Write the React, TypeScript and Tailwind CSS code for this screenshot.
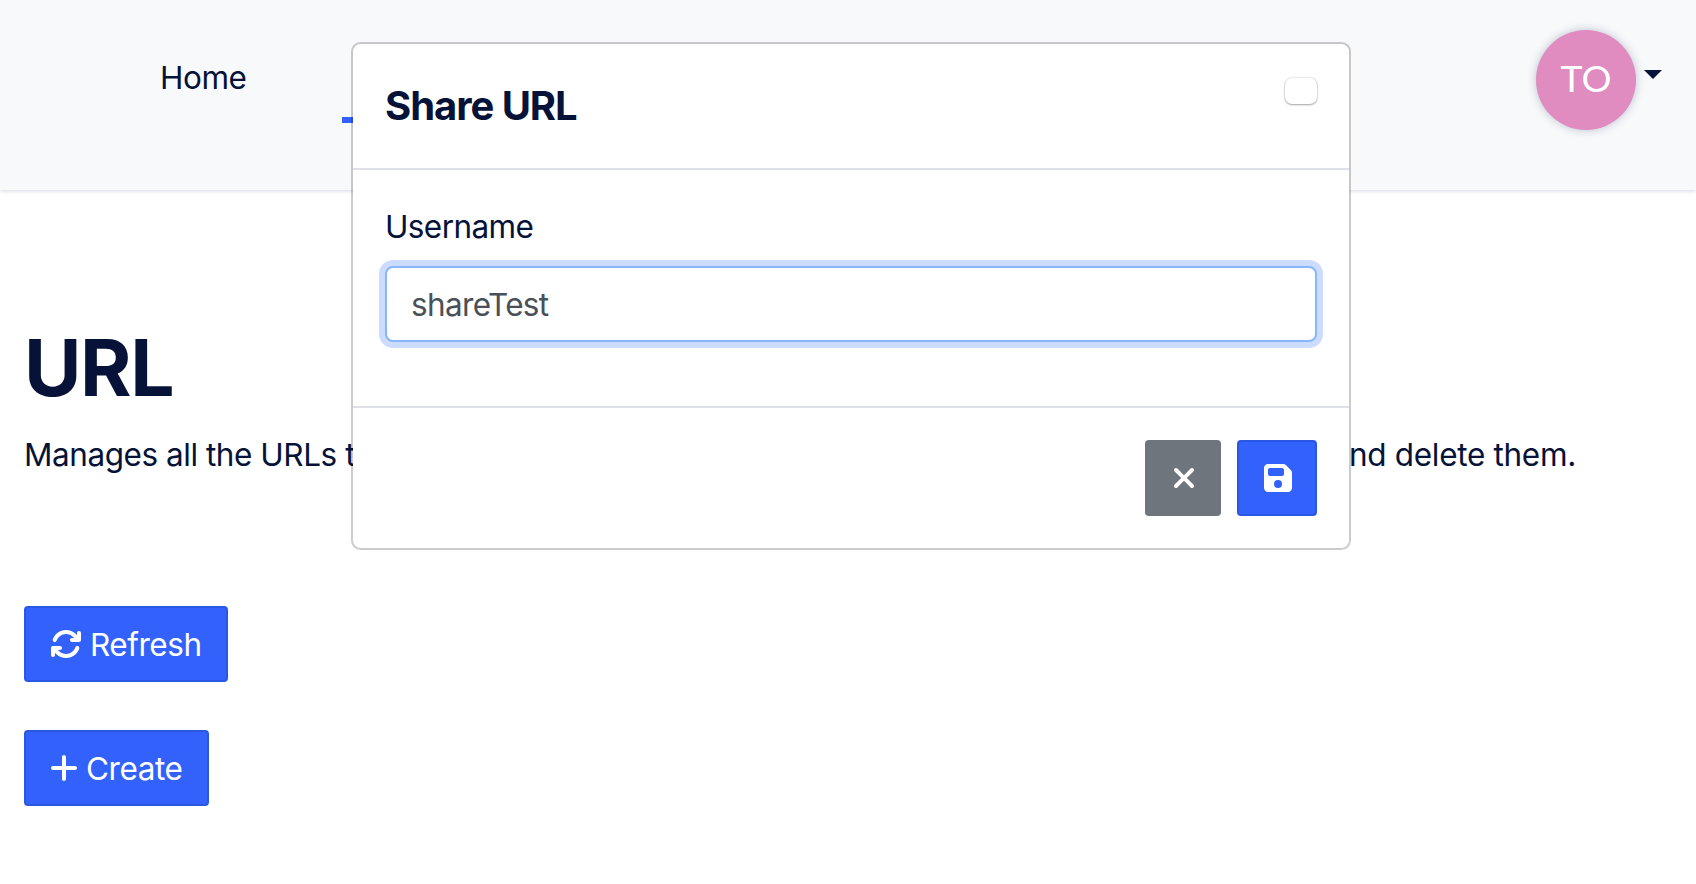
import React from "react";
import { FaArrowsRotate, FaFloppyDisk, FaPlus, FaXmark } from "react-icons/fa6";

function Navbar() {
  return (
    <header className="flex h-[190px] items-start justify-between bg-[#f8f9fb] shadow-[0_1px_4px_rgba(20,30,100,0.18)]">
      <nav className="flex pt-[54px] pl-[160px]">
        <a className="w-[182px] leading-[48px] tracking-[-0.45px]">Home</a>
        <a className="mt-[63px] h-[6px] w-[120px] bg-[#3262fb]" aria-label="URL" />
      </nav>
      <div className="flex pt-[30px] pr-[34px]">
        <div className="flex size-[100px] items-center justify-center rounded-full bg-[#e08cc0] pb-[4px] font-['Lato',sans-serif] text-[37.5px] leading-none text-white shadow-[0_0_10px_rgba(10,30,70,0.25)]">
          TO
        </div>
        <svg className="mt-[40px] ml-[8px] h-[9px] w-[18px]" viewBox="0 0 18 9">
          <path d="M0 0H18L9 9Z" fill="#061237" />
        </svg>
      </div>
    </header>
  );
}

function PrimaryButton({ className, children }: { className: string; children: React.ReactNode }) {
  return (
    <button
      className={`flex h-[76px] items-center rounded-[4px] border-2 border-[#2b58e2] bg-[#3262fb] text-white ${className}`}
    >
      {children}
    </button>
  );
}

function ShareDialog() {
  return (
    <div
      role="dialog"
      className="absolute top-[42px] left-[351px] flex h-[508px] w-[1000px] flex-col rounded-[9.6px] border-2 border-black/20 bg-white bg-clip-padding"
    >
      <div className="flex h-[126px] items-start justify-between border-b-2 border-[#dee2e6] pr-[32px] pl-[32px]">
        <h5 className="pt-[32px] text-[40px] leading-[60px] font-[650] tracking-[-1.05px]">Share URL</h5>
        <button
          aria-label="Close"
          className="mt-[34px] h-[26px] w-[32px] rounded-[7px] bg-white shadow-[0_0_2px_rgba(0,0,0,0.25),0_1px_2px_rgba(0,0,0,0.3)]"
        />
      </div>
      <div className="flex h-[238px] flex-col border-b-2 border-[#dee2e6] px-[32px] pt-[33px]">
        <label className="leading-[48px] tracking-[-0.6px]">Username</label>
        <input
          defaultValue="shareTest"
          className="mt-[15px] h-[76px] w-full rounded-[8px] border-2 border-[#86b7fe] bg-white px-[24px] tracking-[-0.65px] text-[#495057] shadow-[0_0_0_6px_#cbdcff] outline-none"
        />
      </div>
      <div className="flex flex-1 items-start justify-end gap-[16px] pt-[32px] pr-[32px]">
        <button aria-label="Cancel" className="flex size-[76px] items-center rounded-[4px] bg-[#6e757d] pl-[27px] text-white">
          <FaXmark className="h-[32px] w-[24px]" />
        </button>
        <PrimaryButton className="w-[80px] pl-[25px]">
          <FaFloppyDisk className="h-[32px] w-[28px]" />
        </PrimaryButton>
      </div>
    </div>
  );
}

export default function App() {
  return (
    <div className="relative h-[884px] w-[1696px] overflow-hidden bg-white font-['Inter',sans-serif] text-[31.5px] font-[430] text-[#061237]">
      <Navbar />
      <main className="flex flex-col items-start pl-[24px]">
        <h1 className="pt-[130px] text-[78.5px] leading-[96px] font-[650] tracking-[-1.4px]">URL</h1>
        <p className="mt-[15px] flex w-[1552px] justify-between leading-[48px] tracking-[-0.45px]">
          <span>Manages all the URLs that</span>
          <span className="tracking-[-0.3px]">and delete them.</span>
        </p>
        <PrimaryButton className="mt-[127px] w-[204px] pl-[24px]">
          <FaArrowsRotate className="size-[32px]" />
          <span className="ml-[8px] pt-[2px] tracking-[-0.45px]">Refresh</span>
        </PrimaryButton>
        <PrimaryButton className="mt-[48px] w-[185px] pl-[24px]">
          <FaPlus className="h-[32px] w-[28px]" />
          <span className="ml-[8px] pt-[2px] tracking-[-0.45px]">Create</span>
        </PrimaryButton>
      </main>
      <ShareDialog />
    </div>
  );
}
